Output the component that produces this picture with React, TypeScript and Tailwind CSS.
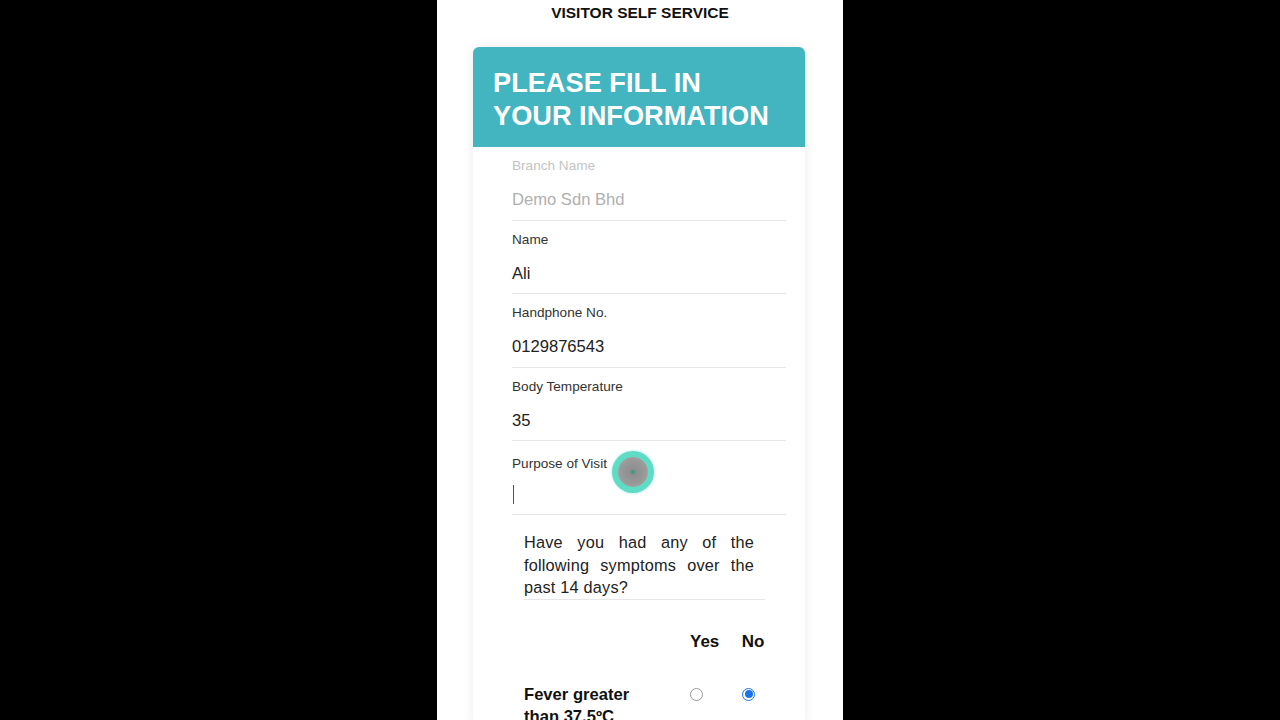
const FIELDS = [
  { label: "Branch Name", value: "Demo Sdn Bhd", disabled: true },
  { label: "Name", value: "Ali" },
  { label: "Handphone No.", value: "0129876543" },
  { label: "Body Temperature", value: "35" },
];

function Field({ label, value, disabled }: { label: string; value: string; disabled?: boolean }) {
  return (
    <div className="border-b border-[#e6e6e6] h-[73.5px] flex flex-col">
      <div className={`mt-[10px] text-[13.6px] leading-[18px] ${disabled ? "text-[#c4c4c4]" : "text-[#333]"}`}>{label}</div>
      <div className={`mt-[15px] text-[16.6px] leading-[20px] ${disabled ? "text-[#b0b0b0]" : "text-[#222]"}`}>{value}</div>
    </div>
  );
}

function Radio({ checked }: { checked?: boolean }) {
  return checked ? (
    <span className="flex h-[13px] w-[13px] items-center justify-center rounded-full border border-[#1a73e8] bg-white">
      <span className="h-[8px] w-[8px] rounded-full bg-[#1a73e8]" />
    </span>
  ) : (
    <span className="block h-[13px] w-[13px] rounded-full border border-[#9a9a9a] bg-white" />
  );
}

export default function App() {
  return (
    <div className="h-[720px] w-[1280px] overflow-hidden bg-black" style={{ fontFamily: '"Liberation Sans", Arial, sans-serif' }}>
      <div className="relative ml-[437px] h-[720px] w-[406px] bg-white">
        <h1 className="pt-[4px] text-center text-[15.5px] font-bold leading-[17px] text-[#111]">VISITOR SELF SERVICE</h1>

        <div className="ml-[36px] mt-[26px] w-[332px] rounded-t-[6px] bg-white shadow-[0_0_12px_rgba(0,0,0,0.08)]">
          <div className="h-[100px] rounded-t-[6px] bg-[#43b5c1] pl-[20px] pt-[19px]">
            <div className="text-[27.2px] font-bold leading-[33px] text-white">
              PLEASE FILL IN
              <br />
              YOUR INFORMATION
            </div>
          </div>

          <div className="pl-[39px] pr-[19px]">
            {FIELDS.map((f) => (
              <Field key={f.label} {...f} />
            ))}
            <div className="h-[74px] border-b border-[#e6e6e6] flex flex-col">
              <div className="mt-[14px] text-[13.6px] leading-[18px] text-[#333]">Purpose of Visit</div>
              <div className="ml-[1px] mt-[12px] h-[19px] w-px bg-[#555]" />
            </div>

            <div className="pl-[12px] pt-[16px]">
              <p className="w-[230px] text-justify text-[16.3px] leading-[22.5px] tracking-[0.2px] text-[#222]">
                Have you had any of the following symptoms over the past 14 days?
              </p>
              <div className="w-[241px] border-b border-[#e6e6e6]" />
              <div className="mt-[32px] flex text-[17px] font-bold leading-[20px] text-[#111]">
                <span className="ml-[166px] w-[24px] text-center">Yes</span>
                <span className="ml-[27px] w-[24px] text-center">No</span>
              </div>
              <div className="mt-[32px] flex items-start">
                <div className="w-[150px] text-[16.6px] font-bold leading-[22px] text-[#111]">
                  Fever greater
                  <br />
                  than 37.5ºC
                </div>
                <div className="flex pt-[4px]">
                  <span className="ml-[16px] flex w-[13px] justify-center"><Radio /></span>
                  <span className="ml-[39px] flex w-[13px] justify-center"><Radio checked /></span>
                </div>
              </div>
            </div>
          </div>
        </div>

        <div className="absolute left-[175px] top-[451px] flex h-[42px] w-[42px] items-center justify-center rounded-full bg-[#5fdcc6] shadow-[0_0_3px_rgba(95,220,198,0.6)]">
          <div className="flex h-[30px] w-[30px] items-center justify-center rounded-full bg-[radial-gradient(circle,#8a8a8a_0%,#9a9a9a_60%,#b5b5b5_100%)]">
            <div className="h-[4px] w-[4px] rounded-full bg-[#3a9a8a]" />
          </div>
        </div>
      </div>
    </div>
  );
}
